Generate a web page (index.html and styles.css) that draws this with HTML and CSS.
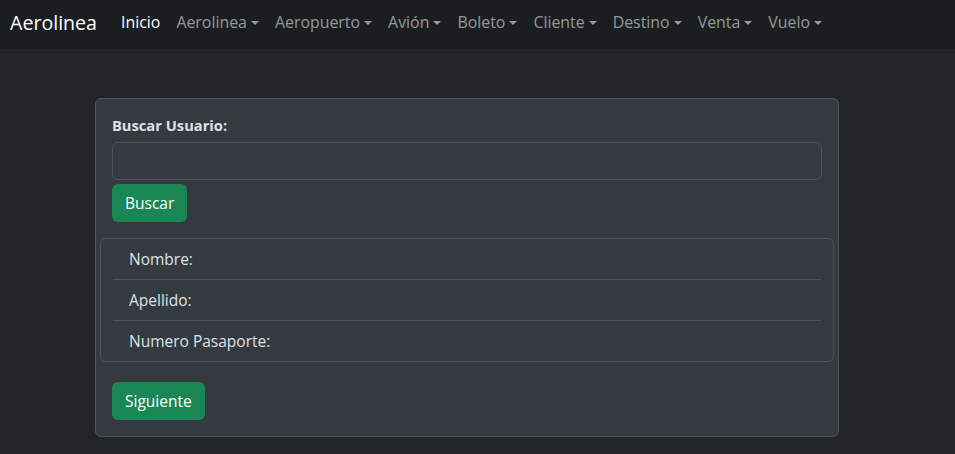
FILE: index.html
```html
<!DOCTYPE html>
<html lang="es">
<head>
<meta charset="utf-8">
<title>Aerolinea</title>
<link rel="stylesheet" href="styles.css">
</head>
<body>
<nav class="navbar">
  <a class="brand" href="#">Aerolinea</a>
  <ul class="nav">
    <li><a class="nav-link active" href="#">Inicio</a></li>
    <li><a class="nav-link dropdown" href="#">Aerolinea</a></li>
    <li><a class="nav-link dropdown" href="#">Aeropuerto</a></li>
    <li><a class="nav-link dropdown" href="#">Avión</a></li>
    <li><a class="nav-link dropdown" href="#">Boleto</a></li>
    <li><a class="nav-link dropdown" href="#">Cliente</a></li>
    <li><a class="nav-link dropdown" href="#">Destino</a></li>
    <li><a class="nav-link dropdown" href="#">Venta</a></li>
    <li><a class="nav-link dropdown" href="#">Vuelo</a></li>
  </ul>
</nav>
<main class="container">
  <div class="card">
    <label class="label" for="buscar">Buscar Usuario:</label>
    <input class="input" id="buscar" type="text">
    <button class="btn">Buscar</button>
    <ul class="list">
      <li class="list-item">Nombre:</li>
      <li class="list-item">Apellido:</li>
      <li class="list-item">Numero Pasaporte:</li>
    </ul>
    <button class="btn btn-next">Siguiente</button>
  </div>
</main>
</body>
</html>
```
FILE: styles.css
```css
* { box-sizing: border-box; }
html, body { margin: 0; padding: 0; }
body {
  background: #212529;
  color: #dee2e6;
  font-family: "Open Sans", "Noto Sans", sans-serif;
  font-size: 15.5px;
  line-height: 24px;
  height: 454px;
  overflow: hidden;
}
.navbar {
  display: flex;
  align-items: center;
  height: 49px;
  background: #1b1e21;
  padding: 0 10px;
}
.brand {
  color: #fff;
  text-decoration: none;
  font-size: 19.6px;
  margin-right: 16px;
  padding-bottom: 4px;
}
.nav {
  display: flex;
  list-style: none;
  margin: 0;
  padding: 0;
  padding-bottom: 5px;
  font-size: 15.9px;
}
.nav-link {
  display: block;
  padding: 0 8px;
  color: rgba(255, 255, 255, 0.55);
  text-decoration: none;
}
.nav-link.active { color: #fff; }
.dropdown::after {
  content: "";
  display: inline-block;
  margin-left: 4px;
  vertical-align: 3px;
  border-top: 4px solid;
  border-left: 4px solid transparent;
  border-right: 4px solid transparent;
}
.container {
  width: 744px;
  margin: 49px 0 0 95px;
}
.card {
  background: #343a40;
  border: 1px solid #4d5359;
  border-radius: 6px;
  padding: 14px 16px 16px;
  display: flex;
  flex-direction: column;
  align-items: flex-start;
}
.label {
  font-weight: 700;
  font-size: 14.7px;
  margin-bottom: 5px;
}
.input {
  width: 100%;
  height: 38px;
  background: #343a40;
  border: 1px solid #4d5359;
  border-radius: 6px;
  margin-bottom: 4px;
}
.btn {
  background: #198754;
  color: #fff;
  border: none;
  border-radius: 6px;
  height: 38px;
  padding: 0 13px;
  font: inherit;
}
.list {
  list-style: none;
  margin: 16px -12px 0;
  padding: 0 12px;
  align-self: stretch;
  border: 1px solid #4d5359;
  border-radius: 6px;
}
.list-item {
  height: 41px;
  padding: 8px 16px 0;
  border-top: 1px solid #4d5359;
}
.list-item:first-child { border-top: none; height: 40px; }
.btn-next { margin-top: 20px; }
```
